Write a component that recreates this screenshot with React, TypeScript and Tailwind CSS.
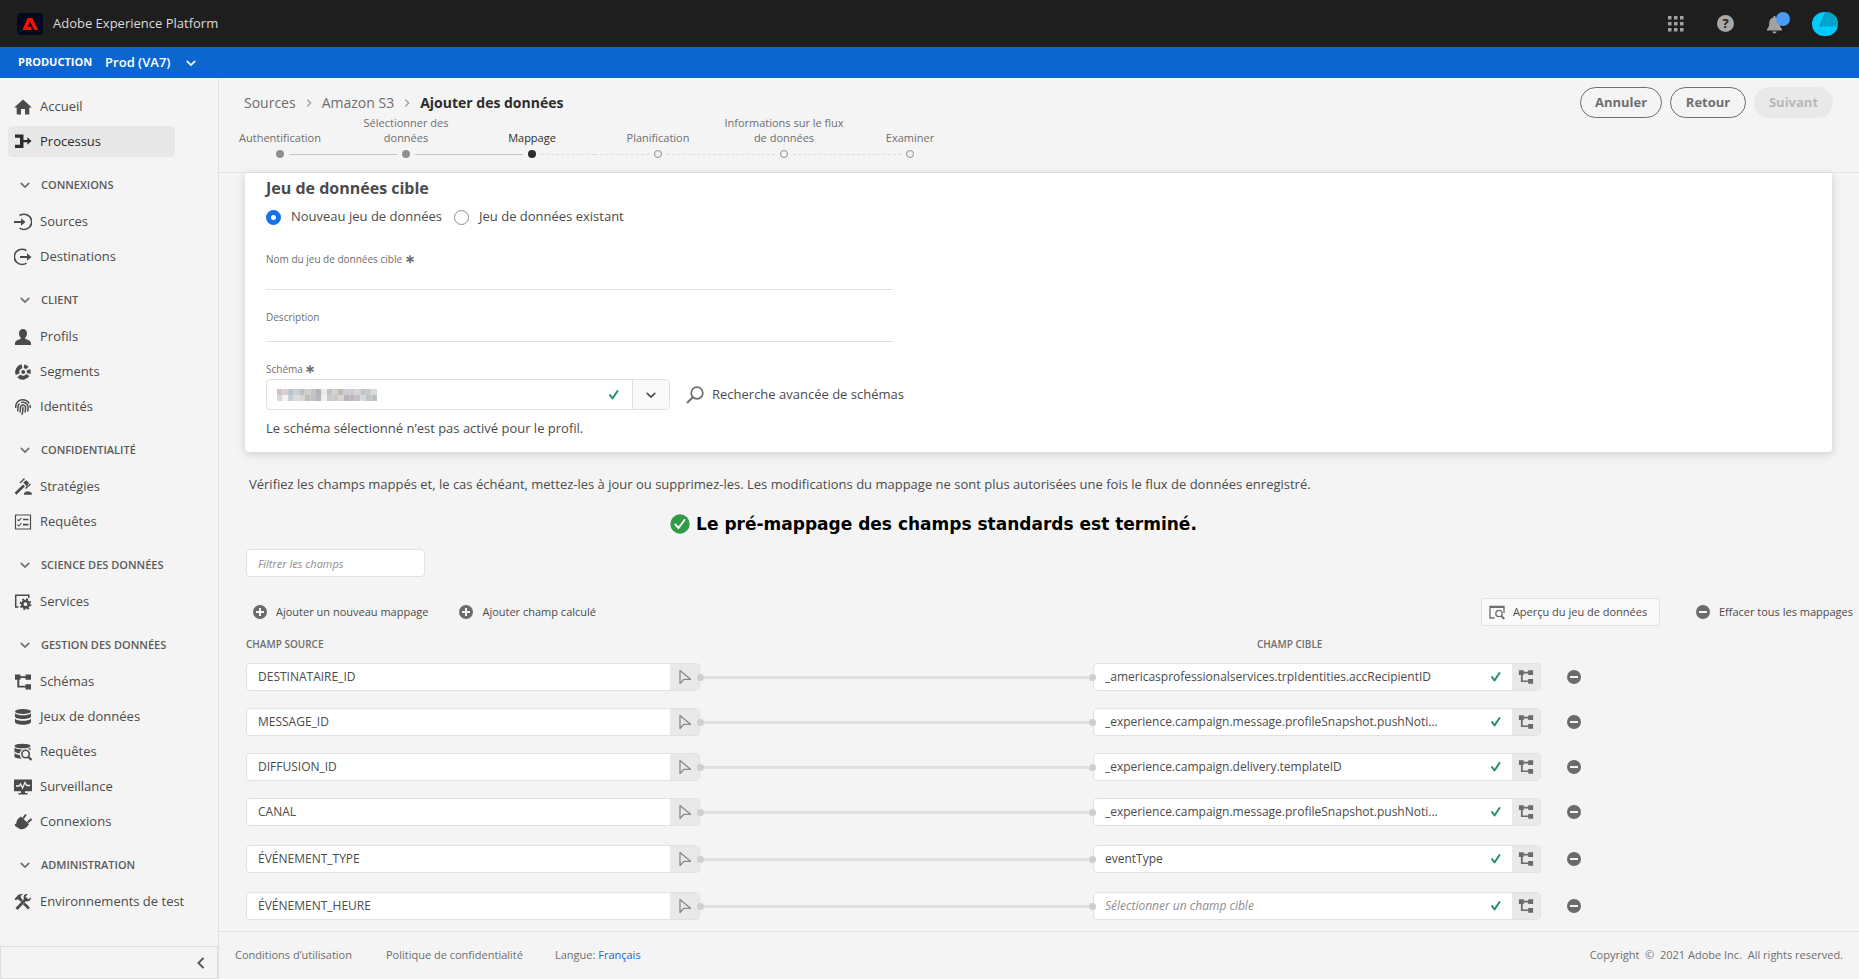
import React from 'react';
import clsx from 'clsx';
import { FaFingerprint } from 'react-icons/fa';

interface IconProps {
  className?: string;
}

const HomeIcon = () => (
  <svg viewBox="0 0 18 18" className="h-[18px] w-[18px]" fill="currentColor">
    <path d="M9 1.5 17.8 9.6H15.3V16.5H11V11H7v5.5H2.7V9.6H.2z" />
  </svg>
);

const WorkflowIcon = () => (
  <svg viewBox="0 0 18 18" className="h-[18px] w-[18px]" fill="currentColor">
    <path d="M1 1.500h8.500v5.500h3.800V4.300L17.500 8 13.300 11.700V9.200H9.500V15H1v-3.200h5V4.700H1z" />
  </svg>
);

const SourcesIcon = () => (
  <svg viewBox="0 0 18 18" className="h-[18px] w-[18px]" fill="none" stroke="currentColor" strokeWidth="1.6">
    <path d="M5.500 2.500C7 1.500 8.500 1.200 10 1.200a7.500 7.500 0 0 1 0 15.300c-1.500 0-3-.3-4.500-1.300" />
    <path d="M0 9h8" strokeWidth="2" />
    <path d="M7 5.300 11.500 9 7 12.700z" fill="currentColor" stroke="none" />
  </svg>
);

const DestinationsIcon = () => (
  <svg viewBox="0 0 18 18" className="h-[18px] w-[18px]" fill="none" stroke="currentColor" strokeWidth="1.6">
    <path d="M12.500 2.500C11 1.500 9.500 1.200 8 1.200a7.500 7.500 0 0 0 0 15.300c1.500 0 3-.3 4.500-1.300" />
    <path d="M6 9h8" strokeWidth="2" />
    <path d="M13 5.300 17.500 9 13 12.700z" fill="currentColor" stroke="none" />
  </svg>
);

const ProfileIcon = () => (
  <svg viewBox="0 0 18 18" className="h-[18px] w-[18px]" fill="currentColor">
    <path d="M9 1c2.400 0 4 1.800 4 4.400 0 1.700-.7 3.200-1.700 4.200v1.200c.1.400 5.700 1.300 5.700 4.700V17H1v-1.500c0-3.400 5.600-4.300 5.700-4.700V9.600C5.700 8.600 5 7.100 5 5.400 5 2.800 6.600 1 9 1z" />
  </svg>
);

const SegmentsIcon = () => (
  <svg viewBox="0 0 18 18" className="h-[18px] w-[18px]" fill="none" stroke="currentColor">
    <path d="M8 3.300A5.800 5.800 0 0 0 3.600 11.200" strokeWidth="4" />
    <path d="M4.800 13A5.800 5.800 0 0 0 13.800 12" strokeWidth="4" />
    <path d="M14.700 10.500A5.800 5.800 0 0 0 14.400 6.800" strokeWidth="4" />
    <path d="M10 3.200A5.800 5.800 0 0 1 13.300 5" strokeWidth="3.500" />
    <circle cx="9.200" cy="9" r="2" fill="currentColor" stroke="none" />
  </svg>
);

const PoliciesIcon = () => (
  <svg viewBox="0 0 18 18" className="h-[18px] w-[18px]" fill="none" stroke="currentColor">
    <path d="M1.500 15.800 10 7.500" strokeWidth="2.600" />
    <path d="M6 5 10.500.5M11.500 10.500 16.500 6" strokeWidth="1.400" />
    <path d="M9.200 4.300 12.500 2.300 15 5 12.700 8.500z" fill="currentColor" stroke="none" />
    <path d="M10 16.700v-2.300h1.500v-1h4.500v1h1.800v2.300z" fill="currentColor" stroke="none" />
  </svg>
);

const RequestsIcon = () => (
  <svg viewBox="0 0 18 18" className="h-[18px] w-[18px]" fill="none" stroke="currentColor">
    <path d="M1.500 2h15v14h-15z" strokeWidth="1.200" />
    <path d="M9 6.500h5.500M9 11.700h5.500" strokeWidth="1.700" />
    <path d="m3.500 6.500 1.300 1.300L7.500 4.800M3.500 11.700 4.800 13l2.700-3" strokeWidth="1.100" />
  </svg>
);

const ServicesIcon = () => (
  <svg viewBox="0 0 18 18" className="h-[18px] w-[18px]" fill="none" stroke="currentColor">
    <path d="M4.500 14H1.700V2.200h13.100V5" strokeWidth="1.500" />
    <circle cx="11.500" cy="11.200" r="3.200" strokeWidth="2.600" />
    <circle cx="11.500" cy="11.200" r="5" strokeWidth="1.800" strokeDasharray="2 1.927" />
  </svg>
);

const SchemaIcon = ({ className }: IconProps) => (
  <svg viewBox="0 0 18 18" className={className || 'h-[18px] w-[18px]'} fill="currentColor">
    <path d="M1 1.500h5.500v1.700h5V1.500H17v5.300h-5.500V5h-5v1.800H5.300v6h6.200v-1.600H17v5.300h-5.500v-1.900H3.300V6.800H1z" />
  </svg>
);

const DatasetsIcon = () => (
  <svg viewBox="0 0 18 18" className="h-[18px] w-[18px]" fill="currentColor">
    <ellipse cx="9" cy="3.500" rx="8" ry="2.500" />
    <path d="M1 5.300C2.500 6.800 5.500 7.300 9 7.300s6.500-.5 8-2v3.200c0 1.500-3.600 2.500-8 2.500s-8-1-8-2.500z" />
    <path d="M1 10.700c1.500 1.500 4.500 2 8 2s6.500-.5 8-2V14c0 1.500-3.600 2.700-8 2.700S1 15.500 1 14z" />
  </svg>
);

const QueriesIcon = () => (
  <svg viewBox="0 0 18 18" className="h-[18px] w-[18px]" fill="currentColor">
    <ellipse cx="8.500" cy="3" rx="8" ry="2.300" />
    <path d="M.5 4.800c2 1.300 5 1.700 8 1.600-1.800 1-2.600 2.300-2.800 4C2.600 10.100.5 9.300.5 8.300zM.5 10.300c1.300.9 3 1.400 5.200 1.600.3 1.500 1 2.700 2.300 3.700-4.200 0-7.500-.8-7.500-2.200zM16.500 4.800v2.600c-.8-.7-1.600-1.100-2.700-1.300z" />
    <circle cx="11.600" cy="11" r="3.700" fill="none" stroke="currentColor" strokeWidth="1.600" />
    <path d="m14.200 13.700 3.300 3.300" stroke="currentColor" strokeWidth="2.200" />
  </svg>
);

const MonitoringIcon = () => (
  <svg viewBox="0 0 18 18" className="h-[18px] w-[18px]" fill="currentColor">
    <path d="M0 1.500h18v11.700h-7V15h2.500v1.500h-9V15H7v-1.800H0z" />
    <path d="M2 8h3l1.500-2 2 4L11 4.500 12.800 7.500H16" fill="none" stroke="#f4f4f4" strokeWidth="1.300" />
  </svg>
);

const PlugIcon = () => (
  <svg viewBox="0 0 18 18" className="h-[18px] w-[18px]" fill="currentColor">
    <path d="M7 3.500 15 11.300C12.900 14.300 11.300 16 8 16.300c-1.700.1-3.300-.6-4.200-1.500C2.300 13.500.2 12.900.8 11.500c.4-.8 1.500-.2 1.500-1.200C2.400 7.500 4 5.500 7 3.500z" />
    <path d="m9 5.500 3-4M13.500 9.500l4-3.500" stroke="currentColor" strokeWidth="2" />
  </svg>
);

const ToolsIcon = () => (
  <svg viewBox="0 0 18 18" className="h-[18px] w-[18px]" fill="none" stroke="currentColor">
    <path d="M2.500 16 13 5" strokeWidth="2.800" />
    <path d="M16.800 4.200 14.500 6.300 12 5.700 11.500 3.500 13.700 1.200C10.500.6 9 3 9.700 5.500l2.700 2.700c2.700.6 5-1 4.400-4z" fill="currentColor" stroke="none" />
    <path d="M5.500 5.500 8 8M10 10.500l5 5.200" strokeWidth="2.600" />
    <path d="M.5 6 4.700 1.500 9.500.8 6.500 3l.8 2.200-2 2L3.500 6 2 7.500z" fill="currentColor" stroke="none" />
  </svg>
);

const ChevronDown = ({ className = 'h-3 w-3' }: IconProps) => (
  <svg viewBox="0 0 12 12" className={className} fill="none" stroke="currentColor" strokeWidth="2" strokeLinecap="round">
    <path d="m1.500 4 4.500 4.500L10.500 4" />
  </svg>
);

const CheckIcon = () => (
  <svg viewBox="0 0 12 12" className="h-3 w-3 shrink-0 text-[#268e6c]" fill="none" stroke="currentColor" strokeWidth="2" strokeLinecap="round" strokeLinejoin="round">
    <path d="m2 6 2.500 3.500 5-7.500" />
  </svg>
);

const PlusCircle = () => (
  <svg viewBox="0 0 16 16" className="h-4 w-4">
    <circle cx="8" cy="8" r="7" fill="#6b6b6b" />
    <path d="M8 4v8M4 8h8" stroke="#f4f4f4" strokeWidth="2" />
  </svg>
);

const MinusCircle = () => (
  <svg viewBox="0 0 16 16" className="h-4 w-4">
    <circle cx="8" cy="8" r="7" fill="#6b6b6b" />
    <path d="M4 8h8" stroke="#f4f4f4" strokeWidth="2" />
  </svg>
);

const CursorIcon = () => (
  <svg viewBox="0 0 14 16" className="h-4 w-[14px]" fill="none" stroke="#8a8a8a" strokeWidth="1.300" strokeLinejoin="round">
    <path d="M2 1.500v13l4-4.200h6.500z" />
  </svg>
);

interface NavItem {
  label: string;
  icon: React.ReactNode;
  active?: boolean;
}

interface NavSection {
  title?: string;
  items: NavItem[];
}

const sections: NavSection[] = [
  {
    items: [
      { label: 'Accueil', icon: <HomeIcon /> },
      { label: 'Processus', icon: <WorkflowIcon />, active: true },
    ],
  },
  {
    title: 'CONNEXIONS',
    items: [
      { label: 'Sources', icon: <SourcesIcon /> },
      { label: 'Destinations', icon: <DestinationsIcon /> },
    ],
  },
  {
    title: 'CLIENT',
    items: [
      { label: 'Profils', icon: <ProfileIcon /> },
      { label: 'Segments', icon: <SegmentsIcon /> },
      { label: 'Identités', icon: <FaFingerprint className="h-4 w-[18px]" /> },
    ],
  },
  {
    title: 'CONFIDENTIALITÉ',
    items: [
      { label: 'Stratégies', icon: <PoliciesIcon /> },
      { label: 'Requêtes', icon: <RequestsIcon /> },
    ],
  },
  {
    title: 'SCIENCE DES DONNÉES',
    items: [{ label: 'Services', icon: <ServicesIcon /> }],
  },
  {
    title: 'GESTION DES DONNÉES',
    items: [
      { label: 'Schémas', icon: <SchemaIcon /> },
      { label: 'Jeux de données', icon: <DatasetsIcon /> },
      { label: 'Requêtes', icon: <QueriesIcon /> },
      { label: 'Surveillance', icon: <MonitoringIcon /> },
      { label: 'Connexions', icon: <PlugIcon /> },
    ],
  },
  {
    title: 'ADMINISTRATION',
    items: [{ label: 'Environnements de test', icon: <ToolsIcon /> }],
  },
];

const steps = [
  { label: 'Authentification', state: 'done' },
  { label: 'Sélectionner des données', state: 'done' },
  { label: 'Mappage', state: 'current' },
  { label: 'Planification', state: 'todo' },
  { label: 'Informations sur le flux de données', state: 'todo' },
  { label: 'Examiner', state: 'todo' },
];

const mappings = [
  { source: 'DESTINATAIRE_ID', target: '_americasprofessionalservices.trpIdentities.accRecipientID' },
  { source: 'MESSAGE_ID', target: '_experience.campaign.message.profileSnapshot.pushNoti...' },
  { source: 'DIFFUSION_ID', target: '_experience.campaign.delivery.templateID' },
  { source: 'CANAL', target: '_experience.campaign.message.profileSnapshot.pushNoti...' },
  { source: 'ÉVÉNEMENT_TYPE', target: 'eventType' },
  { source: 'ÉVÉNEMENT_HEURE', target: '' },
];

// masked schema name, two rows of tiles
const maskTiles = [
  ['#cfc3c3', '#ddd0cf', '#b9c3cd', '#c9d0d4', '#c0bfc0', '#cfcfcf', '#c4c4c8', '#b3b3ba', '#f1e9e4', '#b9c4cf', '#d3cfcb', '#bfb9b4', '#d0ced4', '#c9cbd0', '#d2d6d9', '#c3c3c3', '#cbcbcd', '#d9dbdb'],
  ['#d9d9d9', '#f4f4f2', '#c8cdd0', '#dcdcd8', '#d6d8d5', '#c5beb7', '#c0c0c5', '#b6b6bd', '#f5f2ee', '#c9c9c9', '#c9c9cb', '#dad5cf', '#b7b3bd', '#b9b9c1', '#c8c0c6', '#cfdbe0', '#c4c4c1', '#b9c0c5'],
];

const Header = () => (
  <header className="flex h-[47px] items-center justify-between bg-[#1e1e1e] pr-[21px] pl-[17px]">
    <div className="flex items-center gap-[10px]">
      <svg viewBox="0 0 26 22" className="h-[22px] w-[26px]">
        <rect width="26" height="22" rx="4" fill="#000b1d" />
        <path d="M10.500 5h5L21 17h-3.700L13 8.500 10.700 13.700h2.800l1.300 3.300H5.500z" fill="#fa0f00" />
      </svg>
      <span className="text-[13px] text-[#dcdcdc]">Adobe Experience Platform</span>
    </div>
    <div className="flex items-center text-[#a2a2a2]">
      <button aria-label="Applications" className="mr-8">
        <svg viewBox="0 0 18 18" className="h-[18px] w-[18px]" fill="currentColor">
          {[1, 7, 13].map((y) => [1, 7, 13].map((x) => <rect key={`${x}-${y}`} x={x} y={y} width="3.500" height="3.500" />))}
        </svg>
      </button>
      <button aria-label="Aide" className="mr-8 flex h-[17px] w-[17px] items-center justify-center rounded-full bg-[#a8a8a8] text-[13px] font-bold text-[#1e1e1e]">
        ?
      </button>
      <button aria-label="Notifications" className="mr-[22px]">
        <svg viewBox="0 0 24 24" className="h-6 w-6">
          <path d="M7.500 5.500V4h2v1.500c3 .6 4.300 3 4.300 6 0 3 .7 4 2.200 5.500V18.500H1V17c1.500-1.500 2.200-2.500 2.200-5.500 0-3 1.300-5.400 4.300-6zM6.300 19.500h4.400c-.3 1.200-1 2-2.200 2s-1.900-.8-2.200-2z" fill="#a2a2a2" />
          <circle cx="17" cy="7" r="7" fill="#4b9cf8" />
        </svg>
      </button>
      <button aria-label="Compte" className="h-6 w-[26px] overflow-hidden rounded-full">
        <svg viewBox="0 0 26 24" className="h-full w-full">
          <rect width="26" height="24" fill="#00cbff" />
          <path d="M13 0H26V14.500H7z" fill="#00a2cc" />
        </svg>
      </button>
    </div>
  </header>
);

const Sidebar = () => (
  <aside className="flex w-[219px] shrink-0 flex-col border-r border-[#e1e1e1]">
    <nav className="pt-[11px]">
      {sections.map((section, idx) => (
        <div key={idx}>
          {section.title && (
            <button className="flex h-[45px] w-full items-center pt-[7px] pl-5 text-[11px] font-semibold text-[#5a5a5a]">
              <ChevronDown className="mr-[11px] h-[10px] w-[10px] text-[#6e6e6e]" />
              {section.title}
            </button>
          )}
          <ul>
            {section.items.map((item) => (
              <li key={item.label} className="flex h-[35px] items-center pr-[43px] pl-2">
                <a
                  href="#"
                  className={clsx(
                    'flex h-[31px] w-full items-center gap-2 rounded pl-[6px] text-[13px] whitespace-nowrap [&>svg]:shrink-0',
                    item.active ? 'bg-[#e8e8e8] text-[#2c2c2c]' : 'text-[#4b4b4b]'
                  )}
                >
                  {item.icon}
                  {item.label}
                </a>
              </li>
            ))}
          </ul>
        </div>
      ))}
    </nav>
    <div className="mt-auto flex h-[33px] items-center justify-end border border-[#dedede] pr-[10px]">
      <button aria-label="Réduire le menu" className="text-[#5a5a5a]">
        <ChevronDown className="h-3 w-3 rotate-90" />
      </button>
    </div>
  </aside>
);

const Stepper = () => (
  <ol className="-ml-0.5 flex">
    {steps.map((step, idx) => {
      const reached = step.state !== 'todo';
      const nextReached = idx + 1 < steps.length && steps[idx + 1].state !== 'todo';
      return (
        <li key={step.label} className="w-[126px]">
          <div className={clsx('flex h-[30px] items-end justify-center text-center text-[11px] leading-[15px]', step.state === 'current' ? 'text-[#2c2c2c]' : 'text-[#6e6e6e]')}>
            {step.label}
          </div>
          <div className="flex h-[18px] items-center gap-[5px]">
            <span className={clsx('flex-1 border-t', idx === 0 ? 'border-transparent' : reached ? 'border-[#c4c4c4]' : 'border-dashed border-[#dcdcdc]')} />
            <span
              className={clsx(
                'h-2 w-2 rounded-full',
                step.state === 'done' && 'bg-[#909090]',
                step.state === 'current' && 'bg-[#2c2c2c]',
                step.state === 'todo' && 'border border-[#909090]'
              )}
            />
            <span className={clsx('flex-1 border-t', idx === steps.length - 1 ? 'border-transparent' : nextReached ? 'border-[#c4c4c4]' : 'border-dashed border-[#dcdcdc]')} />
          </div>
        </li>
      );
    })}
  </ol>
);

const PageHeader = () => (
  <div className="flex h-[95px] items-start justify-between border-b border-[#e4e4e4] pr-[26px]">
    <div className="pt-[15px]">
      <nav className="mb-0.5 flex h-5 items-center gap-[9px] pl-[25px] text-sm text-[#6e6e6e]">
        <a href="#">Sources</a>
        <ChevronDown className="h-2 w-2 -rotate-90 text-[#a0a0a0]" />
        <a href="#">Amazon S3</a>
        <ChevronDown className="h-2 w-2 -rotate-90 text-[#a0a0a0]" />
        <span className="font-bold text-[#2c2c2c]">Ajouter des données</span>
      </nav>
      <Stepper />
    </div>
    <div className="flex gap-2 pt-[9px] text-[13px] font-bold">
      <button className="h-[31px] w-[82px] rounded-full border border-[#6e6e6e] text-[#6e6e6e]">Annuler</button>
      <button className="h-[31px] w-[76px] rounded-full border border-[#6e6e6e] text-[#6e6e6e]">Retour</button>
      <button disabled className="h-[31px] w-[79px] rounded-full bg-[#e9e9e9] text-[#b8b8b8]">Suivant</button>
    </div>
  </div>
);

const TargetDataset = () => (
  <section className="mr-[27px] ml-[26px] rounded-b bg-white px-[21px] pt-[5px] pb-[14px] shadow-[0_2px_10px_rgba(0,0,0,0.16)]">
    <h2 className="h-5 text-base leading-5 font-bold text-[#4b4b4b]">Jeu de données cible</h2>
    <div className="mt-[9px] flex h-5 items-center text-[13px] text-[#4b4b4b]">
      <label className="mr-3 flex items-center gap-[10px]">
        <input type="radio" name="dataset" defaultChecked className="h-[15px] w-[15px] appearance-none rounded-full border-[#1473e6] checked:border-[5px]" />
        Nouveau jeu de données
      </label>
      <label className="flex items-center gap-[10px]">
        <input type="radio" name="dataset" className="h-[15px] w-[15px] appearance-none rounded-full border border-[#8e8e8e]" />
        Jeu de données existant
      </label>
    </div>
    <div className="max-w-[627px] text-[10px] leading-4 text-[#6e6e6e]">
      <label htmlFor="name" className="mt-6 block">Nom du jeu de données cible <span className="text-xs font-bold">∗</span></label>
      <input id="name" className="block h-[23px] w-full border-b border-[#e1e1e1]" />
      <label htmlFor="description" className="mt-[19px] block">Description</label>
      <input id="description" className="block h-[17px] w-full border-b border-[#e1e1e1]" />
      <label htmlFor="schema" className="mt-[19px] block">Schéma <span className="text-xs font-bold">∗</span></label>
    </div>
    <div className="mt-0.5 flex items-center">
      <div className="flex h-[31px] w-[404px] items-center rounded border border-[#e1e1e1] pl-[10px]">
        <svg viewBox="0 0 108 12" preserveAspectRatio="none" className="h-3 w-[100px]">
          {maskTiles.map((row, y) => row.map((fill, x) => <rect key={`${x}-${y}`} x={x * 6} y={y * 6} width="6" height="6" fill={fill} />))}
        </svg>
        <input id="schema" className="min-w-0 flex-1" />
        <CheckIcon />
        <button aria-label="Ouvrir la liste" className="ml-3 flex h-full w-[37px] items-center justify-center rounded-r border-l border-[#e1e1e1] bg-[#fafafa] text-[#4b4b4b]">
          <ChevronDown className="h-[10px] w-[10px]" />
        </button>
      </div>
      <button className="ml-4 flex items-center gap-2 text-[13px] text-[#4b4b4b]">
        <svg viewBox="0 0 18 18" className="h-[18px] w-[18px]" fill="none" stroke="#6e6e6e" strokeWidth="1.700">
          <circle cx="11" cy="7" r="5.800" />
          <path d="M6.800 11.300 1 17" strokeWidth="2" />
        </svg>
        Recherche avancée de schémas
      </button>
    </div>
    <p className="mt-2 text-[13px] leading-5 text-[#4b4b4b]">Le schéma sélectionné n’est pas activé pour le profil.</p>
  </section>
);

const Mappings = () => (
  <section className="pl-[27px] text-[#4b4b4b]">
    <p className="mt-[22px] pl-[3px] text-[13px] leading-5">
      Vérifiez les champs mappés et, le cas échéant, mettez-les à jour ou supprimez-les. Les modifications du mappage ne sont plus autorisées une fois le flux de données enregistré.
    </p>
    <div className="mt-5 mr-[238px] flex h-5 items-center justify-center gap-1.5">
      <svg viewBox="0 0 20 20" className="h-5 w-5">
        <circle cx="10" cy="10" r="9.700" fill="#2f9a47" />
        <path d="m5.300 10.500 3.200 3.500 6-8" fill="none" stroke="#fff" strokeWidth="2" strokeLinecap="round" />
      </svg>
      <p className="font-['DejaVu_Sans',sans-serif] text-[17px] leading-5 font-bold text-black">Le pré-mappage des champs standards est terminé.</p>
    </div>
    <input aria-label="Filtrer les champs" placeholder="Filtrer les champs" className="mt-[15px] block h-7 w-[179px] rounded border border-[#e1e1e1] bg-white px-[11px] text-[11px] italic placeholder:text-[#8e8e8e]" />

    <div className="mt-[21px] flex h-7 items-center text-[11px]">
      <button className="ml-[6px] flex items-center gap-2"><PlusCircle />Ajouter un nouveau mappage</button>
      <button className="ml-[30px] flex items-center gap-2"><PlusCircle />Ajouter champ calculé</button>
      <button className="ml-auto flex h-7 w-[179px] items-center gap-2 rounded border border-[#e1e1e1] bg-[#fafafa] pl-[7px]">
        <svg viewBox="0 0 16 16" className="h-4 w-4" fill="none" stroke="#6e6e6e" strokeWidth="1.300">
          <path d="M5.500 14H1V2.500h14V9" />
          <path d="M1 3h14" strokeWidth="2" />
          <circle cx="10" cy="9.500" r="3.200" />
          <path d="m12.300 12 3 3" strokeWidth="1.800" />
        </svg>
        Aperçu du jeu de données
      </button>
      <button className="mr-[6px] ml-[35px] flex items-center gap-2"><MinusCircle />Effacer tous les mappages</button>
    </div>

    <div className="mt-[10px] grid grid-cols-[1011fr_602fr] text-[10px] leading-4 font-semibold text-[#6e6e6e]">
      <span>CHAMP SOURCE</span>
      <span>CHAMP CIBLE</span>
    </div>
    <ul className="mt-[11px]">
      {mappings.map((row, idx) => (
        <li key={row.source} className={clsx('grid grid-cols-[454fr_393fr_448fr_318fr] items-center', idx === 0 ? '' : idx < 4 ? 'mt-[17px]' : 'mt-[19px]')}>
          <div className="flex h-7 rounded border border-[#e1e1e1] bg-white">
            <input aria-label="Champ source" defaultValue={row.source} className="min-w-0 flex-1 px-[11px] text-xs" />
            <button aria-label="Sélectionner un champ source" className="flex w-[29px] items-center justify-center bg-[#e9e9e9]">
              <CursorIcon />
            </button>
          </div>
          <div className="-mx-[3px] flex items-center">
            <span className="h-[7px] w-[7px] rounded-full bg-[#cfcfcf]" />
            <span className="h-[3px] flex-1 bg-[#e0e0e0]" />
            <span className="z-10 h-[7px] w-[7px] rounded-full bg-[#cfcfcf]" />
          </div>
          <div className="flex h-7 items-center rounded border border-[#e1e1e1] bg-white">
            <input aria-label="Champ cible" defaultValue={row.target} placeholder="Sélectionner un champ cible" className="min-w-0 flex-1 pl-[11px] text-xs placeholder:text-[#8e8e8e] placeholder:italic" />
            <CheckIcon />
            <button aria-label="Ouvrir le schéma" className="ml-[10px] flex h-full w-7 items-center justify-center bg-[#e9e9e9] text-[#6b6b6b]">
              <SchemaIcon className="h-4 w-4" />
            </button>
          </div>
          <button aria-label="Supprimer le mappage" className="ml-[25px] w-4"><MinusCircle /></button>
        </li>
      ))}
    </ul>
  </section>
);

const Footer = () => (
  <footer className="mt-auto flex h-[48px] items-center border-t border-[#e4e4e4] px-4 text-[11px] text-[#6e6e6e]">
    <a href="#" className="mr-[34px]">Conditions d’utilisation</a>
    <a href="#" className="mr-8">Politique de confidentialité</a>
    <span>Langue: <a href="#" className="text-[#2563cf]">Français</a></span>
    <span className="ml-auto whitespace-pre">Copyright  ©  2021 Adobe Inc.  All rights reserved.</span>
  </footer>
);

const App: React.FC = () => (
  <div className="flex min-h-screen flex-col bg-[#f4f4f4] font-['Open_Sans','Noto_Sans',sans-serif]">
    <Header />
    <div className="flex h-[31px] items-center bg-[#0d66d0] pl-[18px] text-white">
      <span className="mr-[13px] text-[11px] font-bold">PRODUCTION</span>
      <button className="flex items-center gap-4 text-[13px] font-semibold">
        Prod (VA7)
        <ChevronDown className="h-[10px] w-[10px]" />
      </button>
    </div>
    <div className="flex flex-1">
      <Sidebar />
      <main className="flex min-w-0 flex-1 flex-col">
        <PageHeader />
        <TargetDataset />
        <Mappings />
        <Footer />
      </main>
    </div>
  </div>
);

export default App;
